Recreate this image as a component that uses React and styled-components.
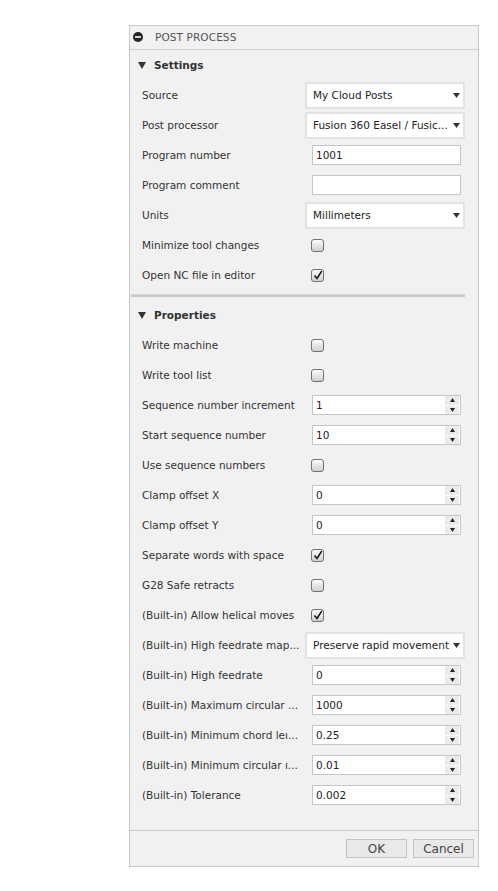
import React from "react";
import styled, { createGlobalStyle } from "styled-components";

const Global = createGlobalStyle`
  html, body { margin: 0; padding: 0; background: #ffffff; }
  body { font-family: "DejaVu Sans", "Liberation Sans", sans-serif; }
  * { box-sizing: border-box; }
`;

const Panel = styled.div`
  margin: 25px 0 0 129px;
  width: 350px;
  height: 842px;
  border: 1px solid #c9c9c9;
  background: #f1f1f1;
  display: flex;
  flex-direction: column;
  font-size: 10.5px;
  color: #333;
`;

const Header = styled.div`
  height: 24px;
  border-bottom: 1px solid #cfcfcf;
  display: flex;
  align-items: center;
  padding: 0 0 1px 3px;
  gap: 12px;
  color: #555;
  font-size: 10.5px;
  letter-spacing: 0.1px;
`;

const Body = styled.div`
  flex: 1;
  display: flex;
  flex-direction: column;
`;

const SectionHead = styled.div`
  height: 30px;
  display: flex;
  align-items: center;
  padding-left: 8px;
  gap: 8px;
  font-weight: bold;
  color: #333;
  font-size: 10.5px;
`;

const Row = styled.div`
  height: 30px;
  display: grid;
  grid-template-columns: 163px 1fr;
  align-items: center;
  padding-left: 12px;
`;

const Label = styled.div`
  white-space: nowrap;
  overflow: hidden;
  color: #333;
`;

const Control = styled.div`
  display: flex;
  align-items: center;
`;

const SelectBox = styled.div`
  width: 160px;
  height: 27px;
  background: #fff;
  border: 2px solid #e3e3e3;
  display: flex;
  align-items: center;
  justify-content: space-between;
  padding: 0 3px 0 6px;
  white-space: nowrap;
  color: #222;
  font-size: 10.5px;
`;

const Field = styled.div`
  margin-left: 7px;
  width: ${(p) => p.$w}px;
  height: 20px;
  background: #fff;
  border: 1px solid #c6c6c6;
  display: flex;
  align-items: center;
  justify-content: space-between;
  color: #222;
  font-size: 10.5px;
`;

const FieldText = styled.span`
  padding-left: 3px;
`;

const Spinner = styled.div`
  width: 14px;
  height: 18px;
  display: flex;
  flex-direction: column;
  gap: 1px;
  margin-right: 1px;
`;

const SpinHalf = styled.div`
  flex: 1;
  background: #ebebeb;
  display: flex;
  align-items: center;
  justify-content: center;
`;

const Check = styled.div`
  margin-left: 6px;
  width: 13px;
  height: 13px;
  border: 1px solid #727272;
  border-radius: 3px;
  background: linear-gradient(#fbfbfb, #d0d0d0);
  display: flex;
  align-items: center;
  justify-content: center;
`;

const Separator = styled.div`
  height: 3px;
  margin: 4px 13px 3px 1px;
  background: #cacaca;
  border-top: 1px solid #d6d6d6;
`;

const Footer = styled.div`
  height: 36px;
  border-top: 1px solid #cdcdcd;
  display: flex;
  justify-content: flex-end;
  align-items: flex-start;
  gap: 6px;
  padding: 8px 4px 0 0;
`;

const Button = styled.div`
  width: 61px;
  height: 19px;
  border: 1px solid #c3c3c3;
  background: #e9e9e9;
  display: flex;
  align-items: center;
  justify-content: center;
  color: #444;
  font-size: 12px;
`;

const Tri = ({ up, size = 5, color = "#222" }) => (
  <svg width={size} height={size - 1} viewBox="0 0 10 8">
    {up ? <path d="M5 0 L10 8 L0 8 Z" fill={color} /> : <path d="M0 0 L10 0 L5 8 Z" fill={color} />}
  </svg>
);

const Arrow = () => (
  <svg width="7" height="5" viewBox="0 0 10 7">
    <path d="M0 0 L10 0 L5 7 Z" fill="#333" />
  </svg>
);

const CheckMark = () => (
  <svg width="10" height="10" viewBox="0 0 10 10">
    <path d="M1.5 5.5 L4 8.5 L8.8 1" fill="none" stroke="#111" strokeWidth="1.4" />
  </svg>
);

const Minus = () => (
  <svg width="10" height="10" viewBox="0 0 10 10">
    <circle cx="5" cy="5" r="5" fill="#222" />
    <rect x="2" y="4.2" width="6" height="1.6" fill="#fff" />
  </svg>
);

const SectionArrow = () => (
  <svg width="8" height="7" viewBox="0 0 8 7">
    <path d="M0 0 L8 0 L4 7 Z" fill="#333" />
  </svg>
);

const Select = ({ value }) => (
  <SelectBox>
    <span>{value}</span>
    <Arrow />
  </SelectBox>
);

const Text = ({ value }) => (
  <Field $w={149}>
    <FieldText>{value}</FieldText>
  </Field>
);

const Spin = ({ value }) => (
  <Field $w={149}>
    <FieldText>{value}</FieldText>
    <Spinner>
      <SpinHalf>
        <Tri up />
      </SpinHalf>
      <SpinHalf>
        <Tri />
      </SpinHalf>
    </Spinner>
  </Field>
);

const Box = ({ checked }) => <Check>{checked && <CheckMark />}</Check>;

const renderControl = (c) => {
  if (c.type === "select") return <Select value={c.value} />;
  if (c.type === "text") return <Text value={c.value} />;
  if (c.type === "spin") return <Spin value={c.value} />;
  return <Box checked={c.value} />;
};

const settings = [
  { label: "Source", type: "select", value: "My Cloud Posts" },
  { label: "Post processor", type: "select", value: "Fusion 360 Easel / Fusic..." },
  { label: "Program number", type: "text", value: "1001" },
  { label: "Program comment", type: "text", value: "" },
  { label: "Units", type: "select", value: "Millimeters" },
  { label: "Minimize tool changes", type: "check", value: false },
  { label: "Open NC file in editor", type: "check", value: true },
];

const properties = [
  { label: "Write machine", type: "check", value: false },
  { label: "Write tool list", type: "check", value: false },
  { label: "Sequence number increment", type: "spin", value: "1" },
  { label: "Start sequence number", type: "spin", value: "10" },
  { label: "Use sequence numbers", type: "check", value: false },
  { label: "Clamp offset X", type: "spin", value: "0" },
  { label: "Clamp offset Y", type: "spin", value: "0" },
  { label: "Separate words with space", type: "check", value: true },
  { label: "G28 Safe retracts", type: "check", value: false },
  { label: "(Built-in) Allow helical moves", type: "check", value: true },
  { label: "(Built-in) High feedrate map...", type: "select", value: "Preserve rapid movement" },
  { label: "(Built-in) High feedrate", type: "spin", value: "0" },
  { label: "(Built-in) Maximum circular ...", type: "spin", value: "1000" },
  { label: "(Built-in) Minimum chord le\u0131...", type: "spin", value: "0.25" },
  { label: "(Built-in) Minimum circular \u0131...", type: "spin", value: "0.01" },
  { label: "(Built-in) Tolerance", type: "spin", value: "0.002" },
];

export default function App() {
  return (
    <>
      <Global />
      <Panel>
        <Header>
          <Minus />
          <span>POST PROCESS</span>
        </Header>
        <Body>
          <SectionHead>
            <SectionArrow />
            <span>Settings</span>
          </SectionHead>
          {settings.map((r) => (
            <Row key={r.label}>
              <Label>{r.label}</Label>
              <Control>{renderControl(r)}</Control>
            </Row>
          ))}
          <Separator />
          <SectionHead>
            <SectionArrow />
            <span>Properties</span>
          </SectionHead>
          {properties.map((r) => (
            <Row key={r.label}>
              <Label>{r.label}</Label>
              <Control>{renderControl(r)}</Control>
            </Row>
          ))}
        </Body>
        <Footer>
          <Button>OK</Button>
          <Button>Cancel</Button>
        </Footer>
      </Panel>
    </>
  );
}
